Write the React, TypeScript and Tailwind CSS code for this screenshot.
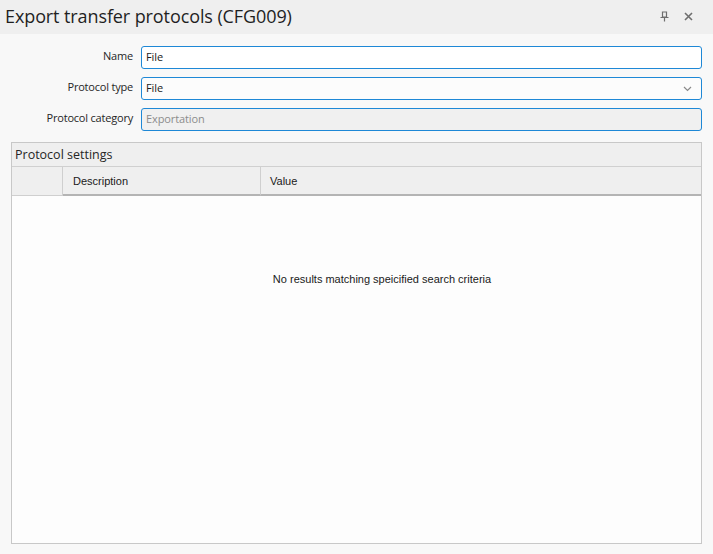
import React from "react";

const ui = { fontFamily: '"Open Sans", "Noto Sans", sans-serif' };
const grid = { fontFamily: '"Liberation Sans", Arial, sans-serif' };

function Field({
  label,
  value,
  variant = "normal",
  dropdown = false,
}: {
  label: string;
  value: string;
  variant?: "normal" | "select" | "disabled";
  dropdown?: boolean;
}) {
  const bg =
    variant === "disabled" ? "bg-[#f0f0f0] text-[#8c8c8c]" : variant === "select" ? "bg-[#fcfcfc] text-[#1a1a1a]" : "bg-white text-[#1a1a1a]";
  return (
    <div className="flex items-center h-[23px]">
      <div className="w-[134px] pr-[1px] text-right text-[11px] tracking-[-0.2px] text-[#262626] leading-none -mt-[5px]">{label}</div>
      <div
        className={`ml-[7px] flex-1 h-[23px] rounded-[3px] border border-[#1e88d6] flex items-center pl-[4px] pr-[9px] text-[11px] tracking-[-0.1px] ${bg}`}
      >
        <span className="flex-1 -mt-[1px]">{value}</span>
        {dropdown && (
          <svg width="9" height="6" viewBox="0 0 9 6" className="mt-[1px]">
            <path d="M1 1 L4.5 4.5 L8 1" fill="none" stroke="#8a8a8a" strokeWidth="1.2" />
          </svg>
        )}
      </div>
    </div>
  );
}

export default function App() {
  return (
    <div className="w-[713px] h-[554px] bg-[#f8f8f8] flex flex-col overflow-hidden" style={ui}>
      <div className="h-[34px] bg-[#efefef] flex items-center pl-[5px] pr-[20px] shrink-0">
        <div className="flex-1 text-[18px] text-[#1f1f1f] -mt-[2px] tracking-[-0.1px]">Export transfer protocols (CFG009)</div>
        <svg width="9" height="11" viewBox="0 0 9 11" className="mr-[15px] -mt-[1px]">
          <path d="M2.5 1 H6.5 V6 H2.5 Z M0.5 6.5 H8.5 M4.5 6.5 V10.5" fill="none" stroke="#6e6e6e" strokeWidth="1.2" />
        </svg>
        <svg width="9" height="9" viewBox="0 0 9 9" className="-mt-[1px]">
          <path d="M1 1 L8 8 M8 1 L1 8" stroke="#6e6e6e" strokeWidth="1.6" />
        </svg>
      </div>

      <div className="flex flex-col gap-[8px] pt-[12px] pl-0 pr-[11px]">
        <Field label="Name" value="File" />
        <Field label="Protocol type" value="File" variant="select" dropdown />
        <Field label="Protocol category" value="Exportation" variant="disabled" />
      </div>

      <div className="mx-[11px] mt-[11px] mb-[10px] flex-1 border border-[#c8c8c8] flex flex-col">
        <div className="h-[24px] bg-[#efefef] border-b border-[#d0d0d0] flex items-center pl-[3px] text-[12.5px] text-[#262626] pt-[1px]">
          Protocol settings
        </div>
        <div className="h-[29px] bg-[#efefef] flex text-[11px] text-[#202020]" style={grid}>
          <div className="w-[51px] border-r border-b border-[#cfcfcf] shrink-0" />
          <div className="w-[198px] border-r border-[#cfcfcf] border-b-2 border-b-[#b4b4b4] flex items-center pl-[10px] pt-[2px] shrink-0">
            Description
          </div>
          <div className="flex-1 border-b-2 border-[#b4b4b4] flex items-center pl-[9px] pt-[2px]">Value</div>
        </div>
        <div className="flex-1 bg-[#fdfdfd] flex pt-[75px] text-[11px] text-[#1a1a1a]" style={grid}>
          <div className="w-[51px] shrink-0" />
          <div className="flex-1 text-center">No results matching speicified search criteria</div>
        </div>
      </div>
    </div>
  );
}
